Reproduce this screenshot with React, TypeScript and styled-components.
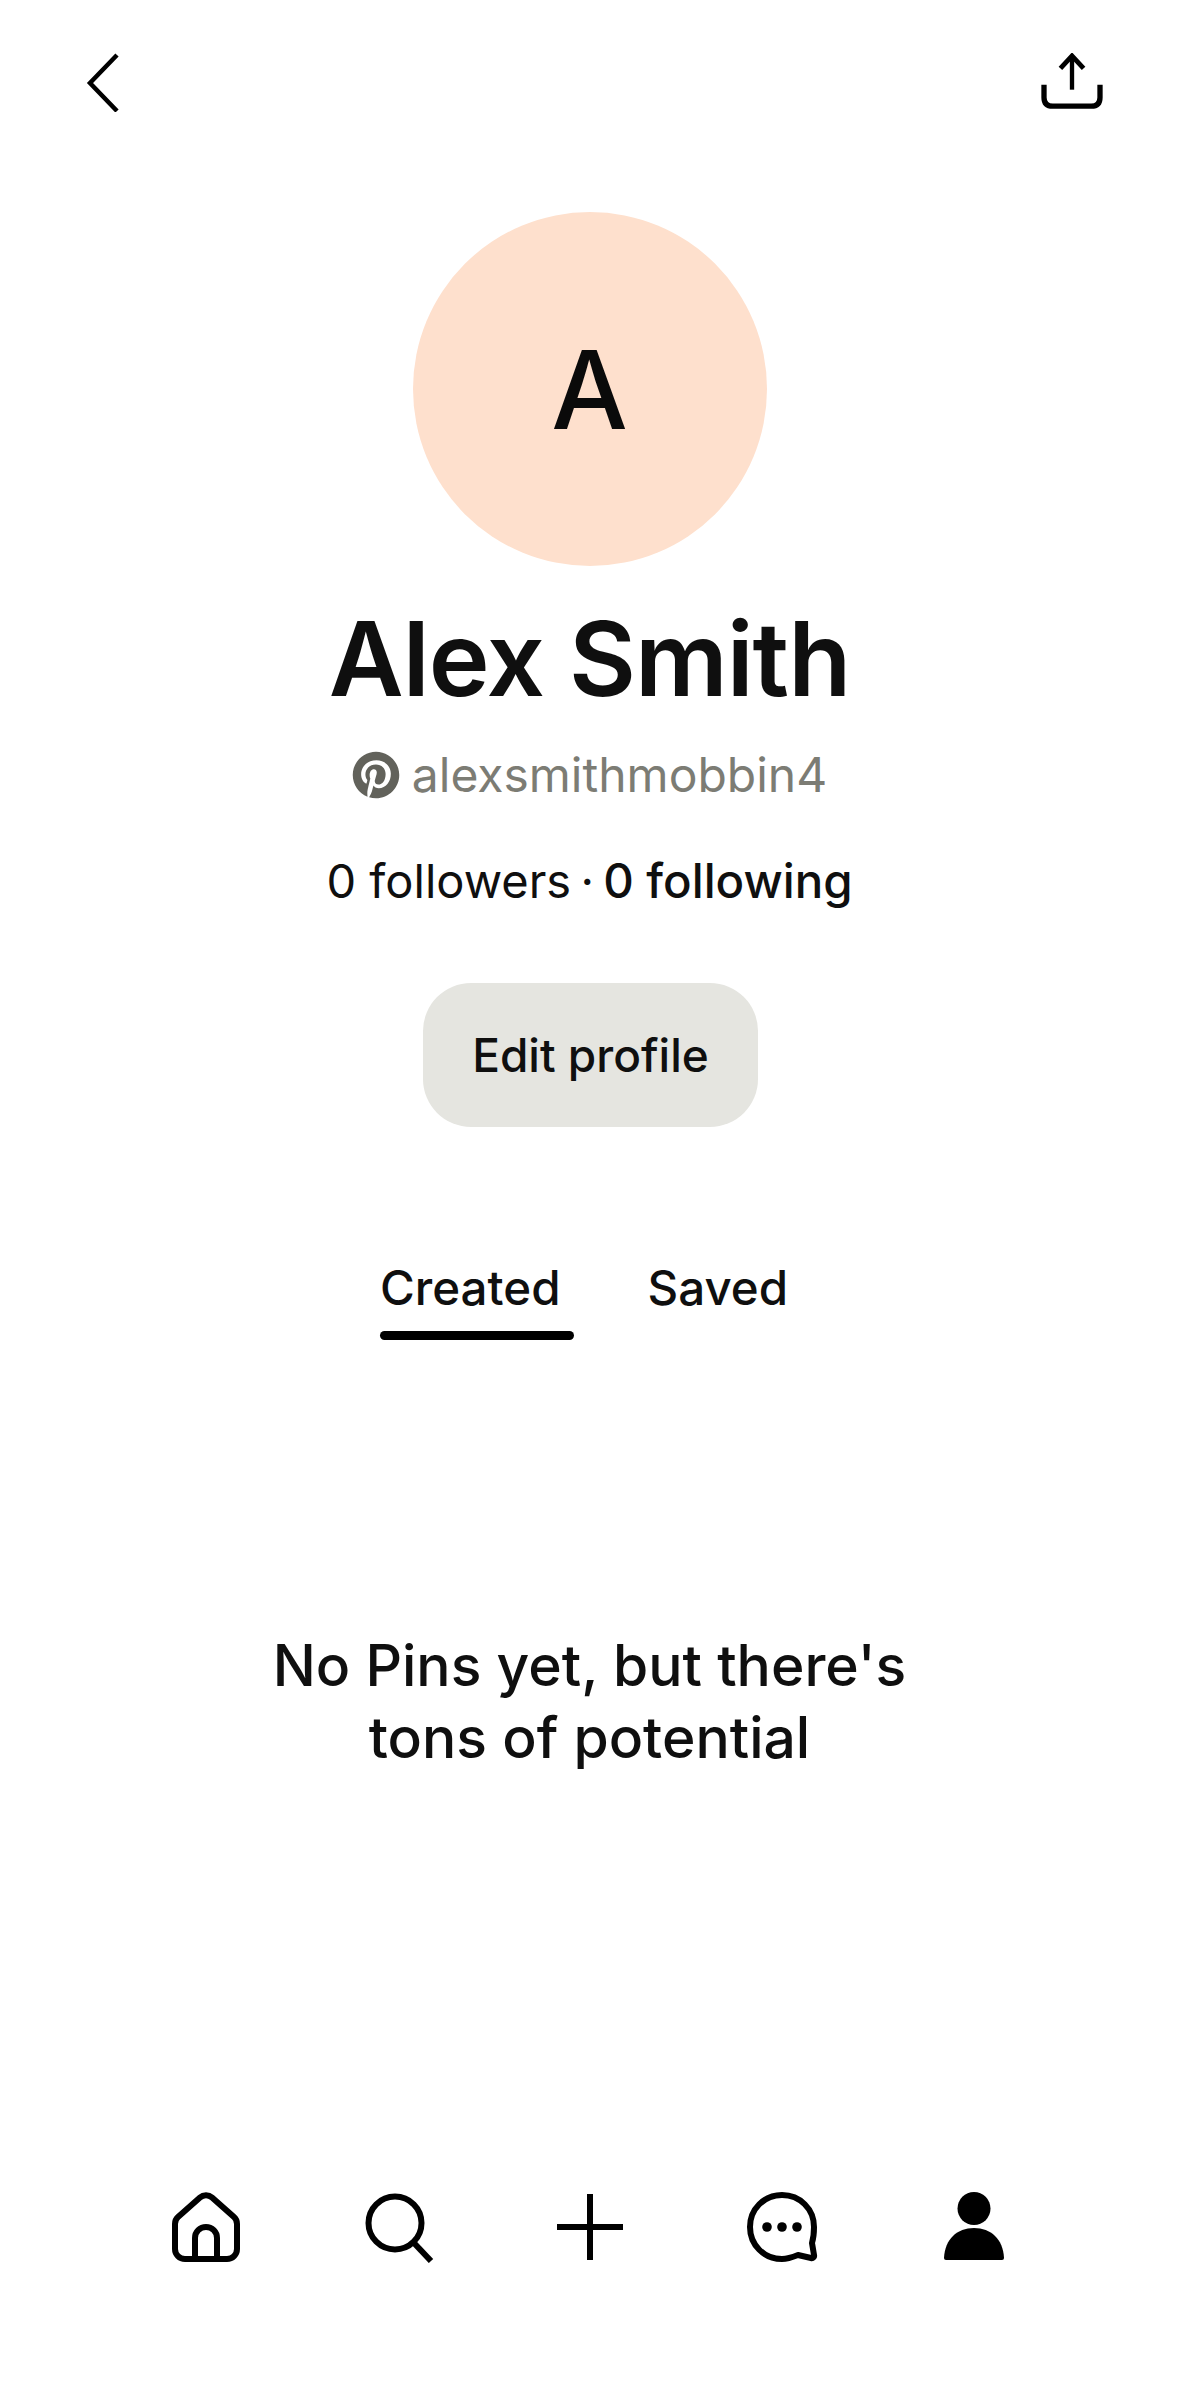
import * as React from "react";
import styled, { createGlobalStyle } from "styled-components";
import { FaPinterest } from "react-icons/fa";

const GlobalStyle = createGlobalStyle`
  html, body {
    margin: 0;
    padding: 0;
    background: #ffffff;
  }
`;

const Page = styled.div`
  width: 1179px;
  height: 2396px;
  display: flex;
  flex-direction: column;
  align-items: center;
  overflow: hidden;
  background: #ffffff;
  color: #0f0f0f;
  font-family: Inter, "Liberation Sans", sans-serif;
`;

const TopBar = styled.div`
  align-self: stretch;
  height: 62px;
  padding: 50px 76px 0 84px;
  display: flex;
  justify-content: space-between;
  align-items: center;
`;

const Avatar = styled.div`
  margin-top: 100px;
  width: 354px;
  height: 354px;
  border-radius: 50%;
  background: #fee0cd;
  display: flex;
  align-items: center;
  justify-content: center;
  font-size: 108px;
  font-weight: 500;
  color: #0a0a0a;
`;

const Name = styled.h1`
  margin: 31px 0 0;
  font-size: 103px;
  line-height: 124px;
  font-weight: 600;
  letter-spacing: -1px;
  color: #0f0f0f;
`;

const Handle = styled.div`
  margin-top: 26px;
  display: flex;
  align-items: center;
  gap: 12px;
  font-size: 48px;
  line-height: 56px;
  color: #7c7c74;
  svg {
    color: #62625b;
  }
`;

const Stats = styled.div`
  margin-top: 50px;
  font-size: 47px;
  line-height: 56px;
`;

const StatDot = styled.span`
  margin: 0 -4px;
`;

const StatStrong = styled.span`
  font-size: 47.4px;
  font-weight: 500;
`;

const EditButton = styled.button`
  margin: 74px 0 0 2px;
  width: 335px;
  height: 144px;
  border: none;
  border-radius: 48px;
  background: #e5e5e0;
  color: #0f0f0f;
  font-family: inherit;
  font-size: 46px;
  font-weight: 500;
`;

const Tabs = styled.div`
  margin: 133px 0 0 -11px;
  display: flex;
  gap: 74px;
`;

const Tab = styled.div<{ $active?: boolean }>`
  font-size: 47.5px;
  line-height: 56px;
  font-weight: 500;
  padding: 0 ${(p) => (p.$active ? "13px" : "0")} 14px 0;
  border-bottom: 10px solid transparent;
  position: relative;
  &:after {
    content: "";
    display: ${(p) => (p.$active ? "block" : "none")};
    position: absolute;
    left: 0;
    right: 0;
    bottom: -10px;
    height: 9px;
    border-radius: 5px;
    background: #000000;
  }
`;

const EmptyMessage = styled.div`
  margin-top: 290px;
  text-align: center;
  font-size: 57px;
  line-height: 72px;
  font-weight: 500;
`;

const BottomNav = styled.nav`
  margin-top: auto;
  margin-bottom: 133px;
  width: 960px;
  display: grid;
  grid-template-columns: repeat(5, 192px);
  justify-items: center;
  align-items: center;
`;

const BackIcon = () => (
  <svg width="36" height="62" viewBox="0 0 36 62" fill="none" stroke="#000" strokeWidth="4.5">
    <path d="M33 5 L6 33 L33 61" />
  </svg>
);

const ShareIcon = () => (
  <svg width="62" height="56" viewBox="0 0 64 58" fill="none" stroke="#000" strokeWidth="4.5">
    <path d="M32 38 V3" />
    <path d="M20 16 L32 3 L44 16" strokeWidth="5" />
    <path d="M3 33 V46 Q3 55 12 55 H52 Q61 55 61 46 V33" strokeWidth="5.5" />
  </svg>
);

const HomeIcon = () => (
  <svg width="72" height="72" viewBox="0 0 72 72" fill="none" stroke="#000" strokeWidth="6" strokeLinejoin="round">
    <path d="M30 6.5 a9 9 0 0 1 12 0 L64 26 a9 9 0 0 1 3 7 V58 a10 10 0 0 1 -10 10 H15 a10 10 0 0 1 -10 -10 V33 a9 9 0 0 1 3 -7 Z" />
    <path d="M25 68 V47 a11 11 0 0 1 22 0 V68" />
  </svg>
);

const SearchIcon = () => (
  <svg width="72" height="72" viewBox="0 0 72 72" fill="none" stroke="#000" strokeWidth="6">
    <circle cx="33" cy="32" r="26.5" />
    <path d="M52 52 L69 70" />
  </svg>
);

const PlusIcon = () => (
  <svg width="66" height="66" viewBox="0 0 66 66" fill="none" stroke="#000" strokeWidth="6">
    <path d="M33 0 V66 M0 33 H66" />
  </svg>
);

const MessageIcon = () => (
  <svg width="72" height="72" viewBox="0 0 72 72" fill="#000">
    <path
      d="M36 4 C18 4 4 18 4 36 C4 54 18 68 36 68 C42 68 47 66 52 64 L65 67 C67 67.5 68.5 66 68 64 L66 52 C67.5 47 68 42 68 36 C68 18 54 4 36 4 Z"
      fill="none"
      stroke="#000"
      strokeWidth="6"
      strokeLinejoin="round"
    />
    <circle cx="21" cy="36" r="4.8" />
    <circle cx="36" cy="36" r="4.8" />
    <circle cx="51" cy="36" r="4.8" />
  </svg>
);

const ProfileIcon = () => (
  <svg width="72" height="72" viewBox="0 0 72 72" fill="#000">
    <circle cx="36" cy="17.5" r="16.5" />
    <path d="M8 69 a2 2 0 0 1 -2 -2 C7 48 19 37 36 37 C53 37 65 48 66 67 a2 2 0 0 1 -2 2 Z" />
  </svg>
);

export default function App() {
  return (
    <Page>
      <GlobalStyle />
      <TopBar>
        <BackIcon />
        <ShareIcon />
      </TopBar>
      <Avatar>A</Avatar>
      <Name>Alex Smith</Name>
      <Handle>
        <FaPinterest size={48} />
        alexsmithmobbin4
      </Handle>
      <Stats>
        0 followers <StatDot>·</StatDot> <StatStrong>0 following</StatStrong>
      </Stats>
      <EditButton>Edit profile</EditButton>
      <Tabs>
        <Tab $active>Created</Tab>
        <Tab>Saved</Tab>
      </Tabs>
      <EmptyMessage>
        No Pins yet, but there's
        <br />
        tons of potential
      </EmptyMessage>
      <BottomNav>
        <HomeIcon />
        <SearchIcon />
        <PlusIcon />
        <MessageIcon />
        <ProfileIcon />
      </BottomNav>
    </Page>
  );
}
